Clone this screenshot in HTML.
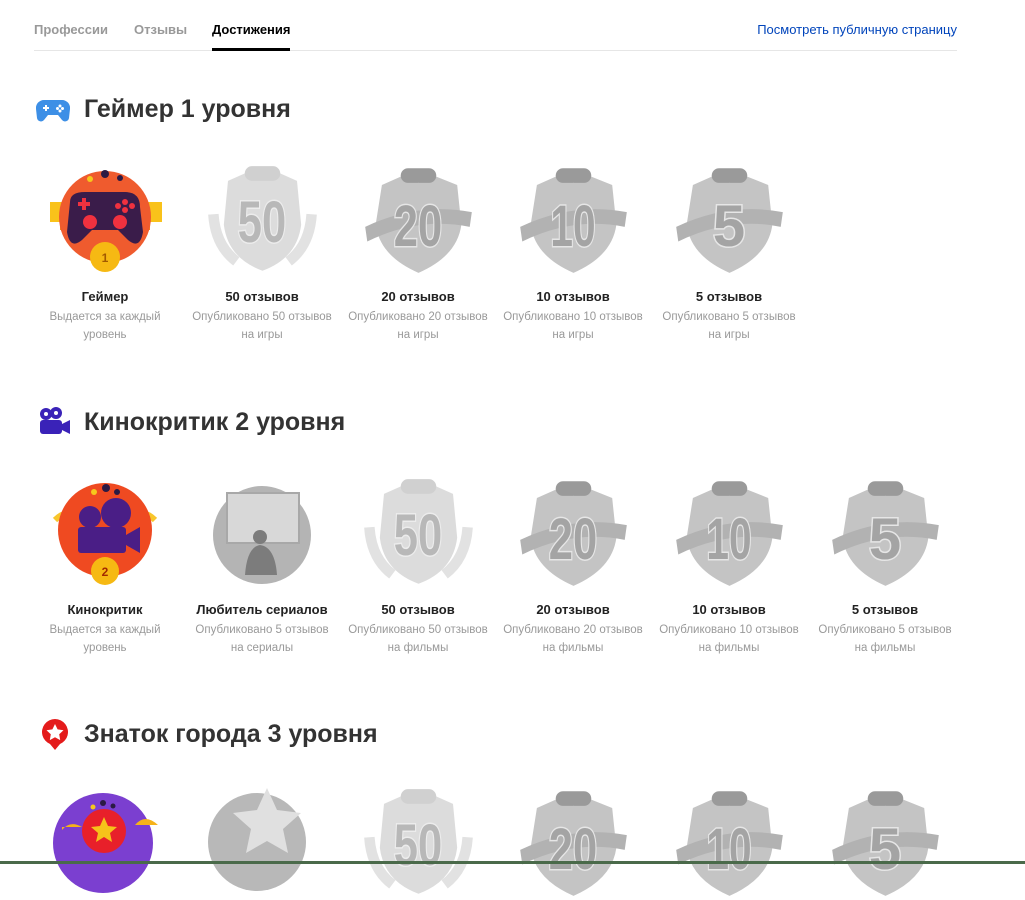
<!DOCTYPE html>
<html><head><meta charset="utf-8">
<style>
body{margin:0;background:#fff;font-family:"Liberation Sans",sans-serif;width:1025px;height:864px;overflow:hidden;position:relative}
.tabs{position:absolute;left:34px;top:0;width:923px;height:50px;border-bottom:1px solid #e6e6e6}
.tab{position:absolute;top:22px;font-size:13px;font-weight:bold;color:#999}
.tab.a{color:#000}
.tab.a:after{content:"";position:absolute;left:0;right:0;top:26px;height:3px;background:#000}
.pub{position:absolute;right:0;top:22px;font-size:13px;color:#0044bb}
h2{position:absolute;left:84px;margin:0;font-size:25px;font-weight:bold;color:#333}
.ic{position:absolute;left:36px}
.b{position:absolute;width:156px;text-align:center}
.b svg{display:block;margin:0 auto}
.t{font-size:13px;font-weight:bold;color:#222;margin-top:0;height:22px;line-height:22px}
.d{font-size:11.5px;color:#999;line-height:18px}
.line{position:absolute;left:0;right:0;top:861px;height:3px;background:#4a6a4a}
</style></head><body>
<svg width="0" height="0" style="position:absolute"><defs>
<symbol id="sh" viewBox="0 0 110 110">
<path d="M20 22 L38 14 L55 20 L72 14 L92 22 L96 60 Q92 90 55 106 Q18 90 14 60 Z" fill="#c4c4c4"/>
<path d="M4 62 Q55 38 106 48 L104 62 Q55 52 6 76Z" fill="#b2b2b2"/>
<path d="M45 6 h20 a6 6 0 0 1 0 14 h-20 a6 6 0 0 1 0-14z" fill="#9a9a9a"/>
</symbol>
<symbol id="sh50" viewBox="0 0 110 110">
<path d="M8 50 Q10 80 30 95 M102 50 Q100 80 80 95" stroke="#e2e2e2" stroke-width="10" fill="none"/>
<path d="M22 18 L40 10 L55 16 L70 10 L88 18 L92 60 Q88 92 55 104 Q22 92 18 60 Z" fill="#dcdcdc"/>
<path d="M45 4 h20 a6 6 0 0 1 0 14 h-20 a6 6 0 0 1 0-14z" fill="#d0d0d0"/>
</symbol>
</defs></svg>

<div class="tabs">
<span class="tab" style="left:0">Профессии</span>
<span class="tab" style="left:100px">Отзывы</span>
<span class="tab a" style="left:178px">Достижения</span>
<span class="pub">Посмотреть публичную страницу</span>
</div>

<svg class="ic" style="top:96px" width="34" height="28" viewBox="0 0 34 28"><path d="M8 4 h18 a8 8 0 0 1 8 9 l-1 9 a4 4 0 0 1-7 2 l-4-5 h-10 l-4 5 a4 4 0 0 1-7-2 l-1-9 a8 8 0 0 1 8-9z" fill="#3d8fe6"/><path d="M7 12h6M10 9v6" stroke="#fff" stroke-width="2"/><circle cx="24" cy="10" r="1.5" fill="#fff"/><circle cx="24" cy="15" r="1.5" fill="#fff"/><circle cx="21.5" cy="12.5" r="1.5" fill="#fff"/><circle cx="26.5" cy="12.5" r="1.5" fill="#fff"/></svg>
<h2 style="top:95px">Геймер 1 уровня</h2>

<svg class="ic" style="top:406px" width="36" height="34" viewBox="0 0 36 34"><circle cx="10" cy="8" r="6" fill="#3a22b8"/><circle cx="20" cy="7" r="6" fill="#3a22b8"/><rect x="4" y="14" width="22" height="14" rx="3" fill="#3a22b8"/><path d="M26 18 l8-4 v14 l-8-4z" fill="#3a22b8"/><circle cx="10" cy="8" r="2" fill="#fff"/><circle cx="20" cy="7" r="2" fill="#fff"/></svg>
<h2 style="top:408px">Кинокритик 2 уровня</h2>

<svg class="ic" style="top:718px;left:40px" width="30" height="34" viewBox="0 0 30 34"><path d="M15 32 l-5-6 a13 13 0 1 1 10 0z" fill="#e41b1b"/><path d="M15 6 l2.6 5.4 5.9.8-4.3 4.1 1 5.8-5.2-2.8-5.2 2.8 1-5.8-4.3-4.1 5.9-.8z" fill="#fff"/></svg>
<h2 style="top:720px">Знаток города 3 уровня</h2>

<!-- row 1 -->
<div class="b" style="left:27px;top:162px">
<svg width="130" height="115" viewBox="0 0 130 115"><rect x="10" y="40" width="30" height="20" fill="#f9c21a"/><rect x="90" y="40" width="32" height="20" fill="#f9c21a"/><rect x="20" y="58" width="14" height="10" fill="#f38b1e"/><rect x="96" y="58" width="14" height="10" fill="#f38b1e"/><circle cx="65" cy="55" r="46" fill="#ef5b2e"/><path d="M30 40 Q30 30 45 30 h40 Q100 30 100 45 L103 70 Q100 88 88 78 L78 68 h-26 l-10 10 Q30 88 27 70z" fill="#3a1c4a"/><path d="M38 42h12M44 36v12" stroke="#f0313f" stroke-width="4"/><circle cx="50" cy="60" r="7" fill="#f0313f"/><circle cx="80" cy="60" r="7" fill="#f0313f"/><circle cx="85" cy="40" r="3" fill="#f0313f"/><circle cx="78" cy="44" r="3" fill="#f0313f"/><circle cx="92" cy="44" r="3" fill="#f0313f"/><circle cx="85" cy="48" r="3" fill="#f0313f"/><circle cx="50" cy="17" r="3" fill="#f6c81c"/><circle cx="65" cy="12" r="4" fill="#2b1a44"/><circle cx="80" cy="16" r="3" fill="#2b1a44"/><circle cx="65" cy="95" r="15" fill="#f6b913"/><text x="65" y="100" font-size="12" font-weight="bold" fill="#a25a00" text-anchor="middle" font-family="Liberation Sans">1</text></svg>
<div class="t" style="margin-top:9px">Геймер</div><div class="d">Выдается за каждый<br>уровень</div></div>

<div class="b" style="left:184px;top:162px">
<svg width="115" height="115"><use href="#sh50"/><text x="57" y="80" font-size="58" font-weight="bold" fill="#b8b8b8" stroke="#ececec" stroke-width="3" paint-order="stroke" text-anchor="middle" font-family="Liberation Sans" transform="translate(57 0) scale(0.75 1) translate(-57 0)">50</text></svg>
<div class="t" style="margin-top:9px">50 отзывов</div><div class="d">Опубликовано 50 отзывов<br>на игры</div></div>

<div class="b" style="left:340px;top:162px">
<svg width="115" height="115"><use href="#sh"/><text x="57" y="84" font-size="58" font-weight="bold" fill="#a4a4a4" stroke="#e6e6e6" stroke-width="3" paint-order="stroke" text-anchor="middle" font-family="Liberation Sans" transform="translate(57 0) scale(0.75 1) translate(-57 0)">20</text></svg>
<div class="t" style="margin-top:9px">20 отзывов</div><div class="d">Опубликовано 20 отзывов<br>на игры</div></div>

<div class="b" style="left:495px;top:162px">
<svg width="115" height="115"><use href="#sh"/><text x="57" y="84" font-size="58" font-weight="bold" fill="#a4a4a4" stroke="#e6e6e6" stroke-width="3" paint-order="stroke" text-anchor="middle" font-family="Liberation Sans" transform="translate(57 0) scale(0.7 1) translate(-57 0)">10</text></svg>
<div class="t" style="margin-top:9px">10 отзывов</div><div class="d">Опубликовано 10 отзывов<br>на игры</div></div>

<div class="b" style="left:651px;top:162px">
<svg width="115" height="115"><use href="#sh"/><text x="57" y="84" font-size="58" font-weight="bold" fill="#a4a4a4" stroke="#e6e6e6" stroke-width="3" paint-order="stroke" text-anchor="middle" font-family="Liberation Sans">5</text></svg>
<div class="t" style="margin-top:9px">5 отзывов</div><div class="d">Опубликовано 5 отзывов<br>на игры</div></div>

<!-- row 2 -->
<div class="b" style="left:27px;top:475px">
<svg width="130" height="115" viewBox="0 0 130 115"><path d="M15 45 Q30 30 40 50 M115 45 Q100 30 90 50" stroke="#f8c62c" stroke-width="6" fill="none"/><circle cx="65" cy="55" r="47" fill="#ef4a21"/><circle cx="50" cy="42" r="11" fill="#4a1e86"/><circle cx="76" cy="38" r="15" fill="#4a1e86"/><rect x="38" y="52" width="48" height="26" rx="3" fill="#4a1e86"/><path d="M86 60 l14-8 v26 l-14-8z" fill="#4a1e86"/><circle cx="54" cy="17" r="3" fill="#f6c81c"/><circle cx="66" cy="13" r="4" fill="#2b1a44"/><circle cx="77" cy="17" r="3" fill="#2b1a44"/><circle cx="65" cy="96" r="14" fill="#f6b913"/><text x="65" y="101" font-size="12" font-weight="bold" fill="#a22a00" text-anchor="middle" font-family="Liberation Sans">2</text></svg>
<div class="t" style="margin-top:9px">Кинокритик</div><div class="d">Выдается за каждый<br>уровень</div></div>

<div class="b" style="left:184px;top:475px">
<svg width="115" height="115" viewBox="0 0 115 115"><circle cx="57" cy="60" r="49" fill="#b4b4b4"/><rect x="22" y="18" width="72" height="50" fill="#d8d8d8" stroke="#a8a8a8" stroke-width="2"/><circle cx="55" cy="62" r="7" fill="#7c7c7c"/><path d="M40 100 Q42 72 55 70 Q70 72 72 100z" fill="#7c7c7c"/></svg>
<div class="t" style="margin-top:9px">Любитель сериалов</div><div class="d">Опубликовано 5 отзывов<br>на сериалы</div></div>

<div class="b" style="left:340px;top:475px">
<svg width="115" height="115"><use href="#sh50"/><text x="57" y="80" font-size="58" font-weight="bold" fill="#b8b8b8" stroke="#ececec" stroke-width="3" paint-order="stroke" text-anchor="middle" font-family="Liberation Sans" transform="translate(57 0) scale(0.75 1) translate(-57 0)">50</text></svg>
<div class="t" style="margin-top:9px">50 отзывов</div><div class="d">Опубликовано 50 отзывов<br>на фильмы</div></div>

<div class="b" style="left:495px;top:475px">
<svg width="115" height="115"><use href="#sh"/><text x="57" y="84" font-size="58" font-weight="bold" fill="#a4a4a4" stroke="#e6e6e6" stroke-width="3" paint-order="stroke" text-anchor="middle" font-family="Liberation Sans" transform="translate(57 0) scale(0.75 1) translate(-57 0)">20</text></svg>
<div class="t" style="margin-top:9px">20 отзывов</div><div class="d">Опубликовано 20 отзывов<br>на фильмы</div></div>

<div class="b" style="left:651px;top:475px">
<svg width="115" height="115"><use href="#sh"/><text x="57" y="84" font-size="58" font-weight="bold" fill="#a4a4a4" stroke="#e6e6e6" stroke-width="3" paint-order="stroke" text-anchor="middle" font-family="Liberation Sans" transform="translate(57 0) scale(0.7 1) translate(-57 0)">10</text></svg>
<div class="t" style="margin-top:9px">10 отзывов</div><div class="d">Опубликовано 10 отзывов<br>на фильмы</div></div>

<div class="b" style="left:807px;top:475px">
<svg width="115" height="115"><use href="#sh"/><text x="57" y="84" font-size="58" font-weight="bold" fill="#a4a4a4" stroke="#e6e6e6" stroke-width="3" paint-order="stroke" text-anchor="middle" font-family="Liberation Sans">5</text></svg>
<div class="t" style="margin-top:9px">5 отзывов</div><div class="d">Опубликовано 5 отзывов<br>на фильмы</div></div>

<!-- row 3 -->
<div class="b" style="left:27px;top:785px">
<svg width="130" height="115" viewBox="0 0 130 115"><circle cx="63" cy="58" r="50" fill="#7b3fd0"/><path d="M22 45 Q30 35 42 42 h-20z M95 40 Q105 28 118 40z" fill="#f6b21a"/><circle cx="64" cy="46" r="22" fill="#e8202a"/><path d="M64 32 l4 9 9 1-7 6 2 9-8-5-8 5 2-9-7-6 9-1z" fill="#f6c21a"/><circle cx="53" cy="22" r="2.5" fill="#f6c81c"/><circle cx="63" cy="18" r="3" fill="#2b1a44"/><circle cx="73" cy="21" r="2.5" fill="#2b1a44"/></svg></div>
<div class="b" style="left:184px;top:780px">
<svg width="115" height="115" viewBox="0 0 115 115"><circle cx="52" cy="62" r="49" fill="#b8b8b8"/><path d="M62 8 l10 22 24 3-18 16 5 24-21-12-21 12 5-24-18-16 24-3z" fill="#e0e0e0"/></svg></div>
<div class="b" style="left:340px;top:785px"><svg width="115" height="115"><use href="#sh50"/><text x="57" y="80" font-size="58" font-weight="bold" fill="#b8b8b8" stroke="#ececec" stroke-width="3" paint-order="stroke" text-anchor="middle" font-family="Liberation Sans" transform="translate(57 0) scale(0.75 1) translate(-57 0)">50</text></svg></div>
<div class="b" style="left:495px;top:785px"><svg width="115" height="115"><use href="#sh"/><text x="57" y="84" font-size="58" font-weight="bold" fill="#a4a4a4" stroke="#e6e6e6" stroke-width="3" paint-order="stroke" text-anchor="middle" font-family="Liberation Sans" transform="translate(57 0) scale(0.75 1) translate(-57 0)">20</text></svg></div>
<div class="b" style="left:651px;top:785px"><svg width="115" height="115"><use href="#sh"/><text x="57" y="84" font-size="58" font-weight="bold" fill="#a4a4a4" stroke="#e6e6e6" stroke-width="3" paint-order="stroke" text-anchor="middle" font-family="Liberation Sans" transform="translate(57 0) scale(0.7 1) translate(-57 0)">10</text></svg></div>
<div class="b" style="left:807px;top:785px"><svg width="115" height="115"><use href="#sh"/><text x="57" y="84" font-size="58" font-weight="bold" fill="#a4a4a4" stroke="#e6e6e6" stroke-width="3" paint-order="stroke" text-anchor="middle" font-family="Liberation Sans">5</text></svg></div>

<div class="line"></div>
</body></html>
